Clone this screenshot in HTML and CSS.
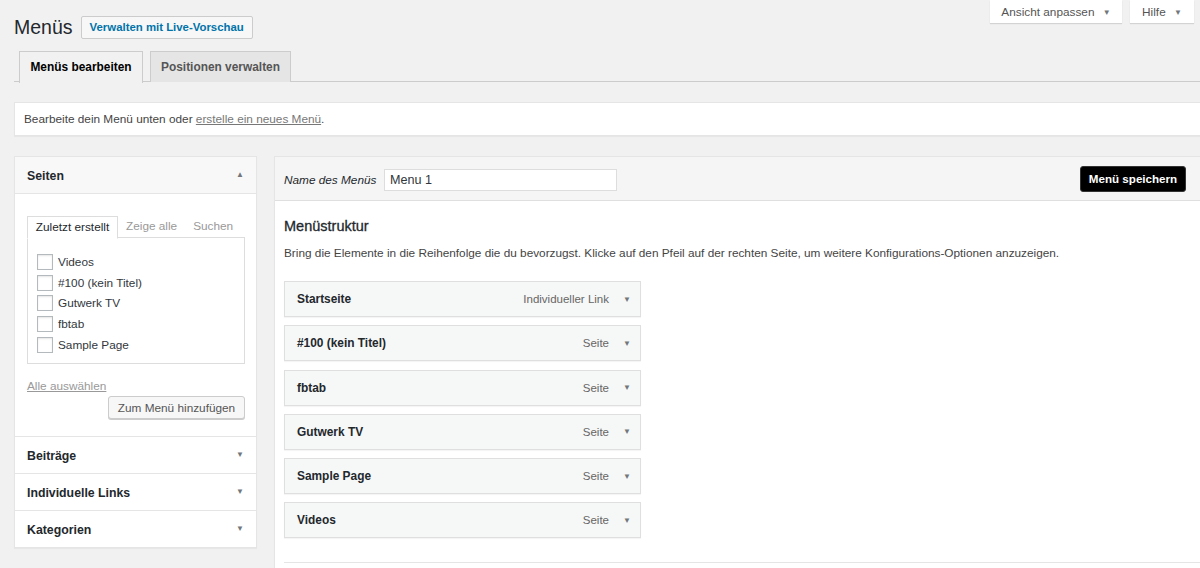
FILE: index.html
```html
<!DOCTYPE html>
<html lang="de">
<head>
<meta charset="utf-8">
<title>Menüs</title>
<link rel="stylesheet" href="styles.css">
</head>
<body>
<div class="screen-meta-links">
  <button class="meta-btn ansicht">Ansicht anpassen <span class="tri">▼</span></button>
  <button class="meta-btn hilfe">Hilfe <span class="tri">▼</span></button>
</div>
<div class="wrap">
  <div class="title-row">
    <h1>Menüs</h1>
    <a class="page-title-action">Verwalten mit Live-Vorschau</a>
  </div>
  <div class="nav-tabs">
    <a class="nav-tab active">Menüs bearbeiten</a>
    <a class="nav-tab">Positionen verwalten</a>
  </div>
  <div class="notice">Bearbeite dein Menü unten oder <a class="link">erstelle ein neues Menü</a>.</div>

  <div class="columns">
    <div class="side">
      <div class="box open">
        <div class="box-head">Seiten <span class="arr up">▲</span></div>
        <div class="box-body">
          <div class="inner-tabs">
            <span class="itab active">Zuletzt erstellt</span>
            <span class="itab">Zeige alle</span>
            <span class="itab">Suchen</span>
          </div>
          <div class="tab-panel">
            <label class="chk"><span class="cb"></span>Videos</label>
            <label class="chk"><span class="cb"></span>#100 (kein Titel)</label>
            <label class="chk"><span class="cb"></span>Gutwerk TV</label>
            <label class="chk"><span class="cb"></span>fbtab</label>
            <label class="chk"><span class="cb"></span>Sample Page</label>
          </div>
          <div class="add-row">
            <a class="select-all">Alle auswählen</a>
            <button class="btn-add">Zum Menü hinzufügen</button>
          </div>
        </div>
      </div>
      <div class="box"><div class="box-head">Beiträge <span class="arr">▼</span></div></div>
      <div class="box"><div class="box-head">Individuelle Links <span class="arr">▼</span></div></div>
      <div class="box"><div class="box-head">Kategorien <span class="arr">▼</span></div></div>
    </div>

    <div class="main">
      <div class="main-head">
        <label class="name-label">Name des Menüs</label>
        <input class="name-input" type="text" value="Menu 1">
        <button class="btn-save">Menü speichern</button>
      </div>
      <div class="main-body">
        <h3>Menüstruktur</h3>
        <p class="desc">Bring die Elemente in die Reihenfolge die du bevorzugst. Klicke auf den Pfeil auf der rechten Seite, um weitere Konfigurations-Optionen anzuzeigen.</p>
        <ul class="menu-items">
          <li class="item"><span class="item-title">Startseite</span><span class="item-type">Individueller Link</span><span class="item-arr">▼</span></li>
          <li class="item"><span class="item-title">#100 (kein Titel)</span><span class="item-type">Seite</span><span class="item-arr">▼</span></li>
          <li class="item"><span class="item-title">fbtab</span><span class="item-type">Seite</span><span class="item-arr">▼</span></li>
          <li class="item"><span class="item-title">Gutwerk TV</span><span class="item-type">Seite</span><span class="item-arr">▼</span></li>
          <li class="item"><span class="item-title">Sample Page</span><span class="item-type">Seite</span><span class="item-arr">▼</span></li>
          <li class="item"><span class="item-title">Videos</span><span class="item-type">Seite</span><span class="item-arr">▼</span></li>
        </ul>
        <div class="bottom-line"></div>
      </div>
    </div>
  </div>
</div>
</body>
</html>
```

FILE: styles.css
```css
html, body {
  margin: 0;
  padding: 0;
  overflow: hidden;
}
body {
  background: #f1f1f1;
  font-family: "Liberation Sans", Arial, sans-serif;
  font-size: 11.8px;
  color: #23282d;
  position: relative;
  height: 568px;
  white-space: nowrap;
}
.screen-meta-links {
  position: absolute;
  top: 0;
  right: 6px;
  display: flex;
  gap: 8px;
}
.meta-btn {
  font-family: inherit;
  font-size: 11.8px;
  color: #555;
  background: #fff;
  border: none;
  box-shadow: 0 1px 1px rgba(0,0,0,0.12);
  height: 23px;
  padding: 0;
  white-space: nowrap;
}
.meta-btn.ansicht { width: 132px; }
.meta-btn.hilfe { width: 64px; }
.tri { font-size: 8px; margin-left: 5px; vertical-align: 1px; color: #72777c; }

.wrap {
  margin-left: 14px;
  margin-right: -20px;
}
.title-row {
  display: flex;
  align-items: center;
  padding-top: 14px;
  height: 26px;
}
h1 {
  margin: 0;
  font-size: 19.5px;
  font-weight: 400;
  color: #23282d;
  line-height: 26px;
}
.page-title-action {
  margin-left: 8px;
  font-size: 11.4px;
  font-weight: 700;
  color: #0073aa;
  border: 1px solid #ccc;
  background: #f7f7f7;
  border-radius: 2px;
  height: 21px;
  line-height: 21px;
  padding: 0 8px;
  margin-top: 1px;
}
.nav-tabs {
  margin-top: 11px;
  display: flex;
  border-bottom: 1px solid #ccc;
  padding-left: 5px;
  height: 30px;
}
.nav-tab {
  border: 1px solid #ccc;
  border-bottom: none;
  background: #e5e5e5;
  color: #555;
  font-size: 11.9px;
  font-weight: 700;
  line-height: 30px;
  height: 30px;
  padding: 0;
  margin-right: 7px;
  text-align: center;
  width: 139px;
}
.nav-tab.active {
  background: #f1f1f1;
  color: #000;
  height: 31px;
  margin-bottom: -1px;
  width: 122px;
}
.notice {
  margin-top: 20px;
  background: #fff;
  box-shadow: 0 1px 1px rgba(0,0,0,0.04);
  border: 1px solid #e5e5e5;
  border-right: none;
  height: 32px;
  line-height: 32px;
  padding-left: 9px;
  color: #444;
}
.link { color: #777; text-decoration: underline; }

.columns {
  display: flex;
  margin-top: 20px;
  gap: 17px;
  align-items: flex-start;
}
.side {
  width: 243px;
  flex: none;
}
.box {
  background: #fff;
  border: 1px solid #e5e5e5;
  border-top: none;
  box-shadow: 0 1px 1px rgba(0,0,0,0.04);
}
.box:first-child { border-top: 1px solid #e5e5e5; }
.box-head {
  height: 36px;
  line-height: 38px;
  padding: 0 12px;
  font-size: 12.3px;
  font-weight: 700;
  color: #23282d;
  display: flex;
  justify-content: space-between;
}
.box.open .box-head {
  background: #f8f8f8;
  border-bottom: 1px solid #e5e5e5;
}
.arr { font-size: 8px; color: #72777c; line-height: 36px; }
.box-body {
  padding: 22px 11px 17px 12px;
}
.inner-tabs {
  display: flex;
  height: 21px;
}
.itab {
  padding: 0 8px;
  line-height: 21px;
  color: #999;
}
.itab.active {
  border: 1px solid #ddd;
  border-bottom: 1px solid #fff;
  color: #23282d;
  padding: 0;
  width: 89px;
  text-align: center;
  margin-bottom: -1px;
  position: relative;
  z-index: 1;
  background: #fff;
  height: 21px;
  line-height: 21px;
}
.tab-panel {
  border: 1px solid #ddd;
  height: 127px;
  padding: 16px 9px 0 9px;
  box-sizing: border-box;
  display: flex;
  flex-direction: column;
  gap: 4.7px;
}
.chk {
  display: flex;
  align-items: center;
  height: 16px;
  color: #32373c;
}
.cb {
  width: 14px;
  height: 14px;
  border: 1px solid #b4b9be;
  background: #fff;
  margin-right: 5px;
  box-shadow: inset 0 1px 2px rgba(0,0,0,0.1);
}
.add-row {
  display: flex;
  flex-direction: column;
  align-items: flex-start;
  margin-top: 15px;
}
.select-all {
  color: #999;
  text-decoration: underline;
  line-height: 14px;
}
.btn-add {
  align-self: flex-end;
  margin-top: 3px;
  font-family: inherit;
  font-size: 11.8px;
  color: #555;
  background: #f7f7f7;
  border: 1px solid #ccc;
  border-radius: 3px;
  box-shadow: 0 1px 0 #ccc;
  height: 23px;
  width: 137px;
  padding: 0;
}

.main {
  flex: 1;
  background: #fff;
  border: 1px solid #e5e5e5;
  box-shadow: 0 1px 1px rgba(0,0,0,0.04);
  height: 430px;
}
.main-head {
  background: #f5f5f5;
  border-bottom: 1px solid #dfdfdf;
  height: 43px;
  display: flex;
  align-items: center;
  padding-left: 9px;
}
.name-label {
  font-style: italic;
  color: #23282d;
  width: 100px;
  margin-top: 2px;
}
.name-input {
  width: 233px;
  height: 22px;
  box-sizing: border-box;
  border: 1px solid #ddd;
  font-family: inherit;
  font-size: 12.6px;
  padding: 0 5px;
  color: #32373c;
  margin-top: 2px;
}
.btn-save {
  margin-left: auto;
  margin-right: 33px;
  background: #000;
  color: #fff;
  border: 1px solid #333;
  border-radius: 3px;
  font-family: inherit;
  font-size: 11.6px;
  font-weight: 700;
  height: 26px;
  padding: 0;
  width: 106px;
}
.main-body {
  padding: 0 9px;
}
h3 {
  margin: 16px 0 0 0;
  font-size: 14.5px;
  font-weight: 400;
  -webkit-text-stroke: 0.3px #23282d;
  line-height: 18px;
  color: #23282d;
}
.desc {
  margin: 8px 0 0 0;
  color: #444;
  font-size: 11.8px;
  line-height: 20px;
}
.menu-items {
  list-style: none;
  margin: 18px 0 0 0;
  padding: 0;
  display: flex;
  flex-direction: column;
  gap: 8.3px;
}
.item {
  width: 357px;
  height: 36px;
  box-sizing: border-box;
  border: 1px solid #dfdfdf;
  background: #f6f7f7;
  box-shadow: 0 1px 1px rgba(0,0,0,0.04);
  display: flex;
  align-items: center;
  padding: 0 0 0 12px;
}
.item-title {
  font-weight: 700;
  color: #23282d;
  flex: 1;
  font-size: 11.9px;
}
.item-type {
  color: #666;
  font-size: 11.5px;
}
.item-arr {
  font-size: 8px;
  color: #72777c;
  width: 26px;
  text-align: center;
  margin-left: 5px;
}
.bottom-line {
  border-top: 1px solid #e5e5e5;
  margin-top: 24px;
}
```
